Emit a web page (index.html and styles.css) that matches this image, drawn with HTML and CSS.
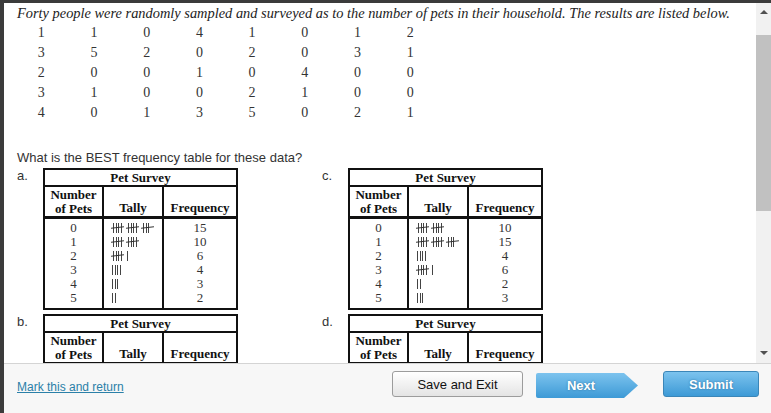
FILE: index.html
```html
<!DOCTYPE html>
<html>
<head>
<meta charset="utf-8">
<link rel="stylesheet" href="styles.css">
</head>
<body>
<div class="frame">
  <div class="main">
    <div class="content">
      <p class="intro">Forty people were randomly sampled and surveyed as to the number of pets in their household. The results are listed below.</p>
      <div class="nums">
        <span>1</span><span>1</span><span>0</span><span>4</span><span>1</span><span>0</span><span>1</span><span>2</span>
        <span>3</span><span>5</span><span>2</span><span>0</span><span>2</span><span>0</span><span>3</span><span>1</span>
        <span>2</span><span>0</span><span>0</span><span>1</span><span>0</span><span>4</span><span>0</span><span>0</span>
        <span>3</span><span>1</span><span>0</span><span>0</span><span>2</span><span>1</span><span>0</span><span>0</span>
        <span>4</span><span>0</span><span>1</span><span>3</span><span>5</span><span>0</span><span>2</span><span>1</span>
      </div>
      <p class="question">What is the BEST frequency table for these data?</p>
      <div class="options">
        <span class="lbl">a.</span>
        <table class="pt">
          <colgroup><col class="k1"><col class="k2"><col class="k3"></colgroup>
          <tr><th class="title" colspan="3">Pet Survey</th></tr>
          <tr class="hd"><td>Number<br>of Pets</td><td>Tally</td><td>Frequency</td></tr>
          <tr class="first"><td>0</td><td class="tl"><i class="t5"></i><i class="t5"></i><i class="t5"></i></td><td>15</td></tr>
          <tr><td>1</td><td class="tl"><i class="t5"></i><i class="t5"></i></td><td>10</td></tr>
          <tr><td>2</td><td class="tl"><i class="t5"></i><i class="t1"></i></td><td>6</td></tr>
          <tr><td>3</td><td class="tl"><i class="t4"></i></td><td>4</td></tr>
          <tr><td>4</td><td class="tl"><i class="t3"></i></td><td>3</td></tr>
          <tr class="last"><td>5</td><td class="tl"><i class="t2"></i></td><td>2</td></tr>
        </table>
        <span class="gap"></span>
        <span class="lbl">c.</span>
        <table class="pt">
          <colgroup><col class="k1"><col class="k2"><col class="k3"></colgroup>
          <tr><th class="title" colspan="3">Pet Survey</th></tr>
          <tr class="hd"><td>Number<br>of Pets</td><td>Tally</td><td>Frequency</td></tr>
          <tr class="first"><td>0</td><td class="tl"><i class="t5"></i><i class="t5"></i></td><td>10</td></tr>
          <tr><td>1</td><td class="tl"><i class="t5"></i><i class="t5"></i><i class="t5"></i></td><td>15</td></tr>
          <tr><td>2</td><td class="tl"><i class="t4"></i></td><td>4</td></tr>
          <tr><td>3</td><td class="tl"><i class="t5"></i><i class="t1"></i></td><td>6</td></tr>
          <tr><td>4</td><td class="tl"><i class="t2"></i></td><td>2</td></tr>
          <tr class="last"><td>5</td><td class="tl"><i class="t3"></i></td><td>3</td></tr>
        </table>

        <span class="lbl">b.</span>
        <table class="pt">
          <colgroup><col class="k1"><col class="k2"><col class="k3"></colgroup>
          <tr><th class="title" colspan="3">Pet Survey</th></tr>
          <tr class="hd"><td>Number<br>of Pets</td><td>Tally</td><td>Frequency</td></tr>
          <tr class="first"><td>0</td><td class="tl"><i class="t5"></i><i class="t5"></i><i class="t5"></i></td><td>15</td></tr>
          <tr><td>1</td><td class="tl"><i class="t5"></i><i class="t5"></i></td><td>10</td></tr>
          <tr><td>2</td><td class="tl"><i class="t4"></i></td><td>4</td></tr>
          <tr><td>3</td><td class="tl"><i class="t5"></i><i class="t1"></i></td><td>6</td></tr>
          <tr><td>4</td><td class="tl"><i class="t3"></i></td><td>3</td></tr>
          <tr class="last"><td>5</td><td class="tl"><i class="t2"></i></td><td>2</td></tr>
        </table>
        <span class="gap"></span>
        <span class="lbl">d.</span>
        <table class="pt">
          <colgroup><col class="k1"><col class="k2"><col class="k3"></colgroup>
          <tr><th class="title" colspan="3">Pet Survey</th></tr>
          <tr class="hd"><td>Number<br>of Pets</td><td>Tally</td><td>Frequency</td></tr>
          <tr class="first"><td>0</td><td class="tl"><i class="t5"></i><i class="t5"></i></td><td>10</td></tr>
          <tr><td>1</td><td class="tl"><i class="t5"></i><i class="t5"></i><i class="t5"></i></td><td>15</td></tr>
          <tr><td>2</td><td class="tl"><i class="t5"></i><i class="t1"></i></td><td>6</td></tr>
          <tr><td>3</td><td class="tl"><i class="t4"></i></td><td>4</td></tr>
          <tr><td>4</td><td class="tl"><i class="t2"></i></td><td>2</td></tr>
          <tr class="last"><td>5</td><td class="tl"><i class="t3"></i></td><td>3</td></tr>
        </table>
      </div>
    </div>
    <div class="scrollbar">
      <span class="arrow up"></span>
      <span class="thumb"></span>
      <span class="arrow down"></span>
    </div>
  </div>
  <div class="footer">
    <a class="mark" href="#">Mark this and return</a>
    <div class="buttons">
      <button class="btn save">Save and Exit</button>
      <button class="btn next">Next</button>
      <button class="btn submit">Submit</button>
    </div>
  </div>
</div>
</body>
</html>
```

FILE: styles.css
```css
html, body {
  margin: 0;
  padding: 0;
}
body {
  background: #3b3b3b;
  padding: 3px 0 0 4px;
  width: 771px;
  height: 413px;
  box-sizing: border-box;
  overflow: hidden;
}
.frame {
  width: 767px;
  height: 410px;
  background: #fff;
  display: flex;
  flex-direction: column;
}
.main {
  height: 360px;
  display: flex;
  flex: none;
}
.content {
  flex: 1;
  overflow: hidden;
  padding-left: 13px;
}
.intro {
  margin: 0;
  height: 20px;
  line-height: 20px;
  font-family: "Liberation Serif", serif;
  font-style: italic;
  font-size: 14.4px;
  color: #222;
  white-space: nowrap;
}
.nums {
  display: grid;
  grid-template-columns: repeat(8, 52.7px);
  grid-auto-rows: 20px;
  margin-left: -2px;
  font-family: "Liberation Serif", serif;
  font-size: 14px;
  line-height: 20px;
  color: #333;
  text-align: center;
}
.question {
  margin: 27px 0 0;
  font-family: "Liberation Sans", Arial, sans-serif;
  font-size: 13px;
  line-height: 16px;
  color: #333;
}
.options {
  display: grid;
  grid-template-columns: 26px 195px 84px 26px 195px;
  row-gap: 4px;
  margin-top: 2px;
  align-items: start;
}
.lbl {
  font-family: "Liberation Sans", Arial, sans-serif;
  font-size: 13px;
  line-height: 16px;
  color: #333;
}
.pt {
  border-collapse: collapse;
  width: 193px;
  table-layout: fixed;
  border: 2px solid #111;
  font-family: "Liberation Serif", serif;
  font-size: 13px;
  color: #333;
}
.pt col.k1 { width: 59px; }
.pt col.k2 { width: 60px; }
.pt col.k3 { width: 74px; }
.pt td, .pt th {
  padding: 0;
  text-align: center;
  line-height: 14px;
}
.pt .title {
  height: 15px;
  line-height: 15px;
  font-weight: bold;
  color: #111;
  border-bottom: 2px solid #111;
}
.pt .hd td {
  height: 28px;
  vertical-align: bottom;
  font-weight: bold;
  color: #111;
  border-bottom: 3px solid #111;
  padding-bottom: 1px;
}
.pt .hd td:first-child {
  vertical-align: top;
  padding: 1px 0 0;
  height: 28px;
}
.pt td + td {
  border-left: 2px solid #111;
}
.pt .first td { padding-top: 2px; }
.pt .last td { padding-bottom: 3px; }
.pt td.tl {
  text-align: left;
  padding-left: 8px;
}
.pt i {
  display: inline-block;
  position: relative;
  height: 10px;
  vertical-align: -1px;
  margin-right: 4px;
  background: repeating-linear-gradient(90deg, #444 0 1px, transparent 1px 2.6px);
}
.pt i.t1 { width: 1px; }
.pt i.t2 { width: 3.6px; }
.pt i.t3 { width: 6.2px; }
.pt i.t4 { width: 8.8px; }
.pt i.t5 { width: 8.8px; margin-right: 5px; margin-left: 1px; }
.pt i.t5::after {
  content: "";
  position: absolute;
  left: -2px;
  right: -2px;
  top: 4px;
  height: 1px;
  background: #333;
  transform: rotate(-6deg);
}
.scrollbar {
  width: 15px;
  flex: none;
  background: #f1f1f1;
  display: flex;
  flex-direction: column;
  align-items: center;
}
.arrow {
  width: 0;
  height: 0;
  border-left: 4px solid transparent;
  border-right: 4px solid transparent;
}
.arrow.up {
  margin-top: 7px;
  border-bottom: 4px solid #505050;
}
.thumb {
  width: 15px;
  height: 176px;
  margin-top: 21px;
  background: #c1c1c1;
}
.arrow.down {
  margin-top: auto;
  margin-bottom: 8px;
  border-top: 4px solid #505050;
}
.footer {
  flex: 1;
  border-top: 1px solid #d4d4d4;
  background: #f7f7f7;
  display: flex;
  align-items: flex-start;
  padding: 7px 12px 0 13px;
}
.mark {
  font-family: "Liberation Sans", Arial, sans-serif;
  font-size: 12px;
  color: #2b80a8;
  text-decoration: underline;
  margin-top: 9px;
}
.buttons {
  margin-left: auto;
  display: flex;
  align-items: flex-start;
}
.btn {
  height: 26px;
  padding: 0;
  font-family: "Liberation Sans", Arial, sans-serif;
  font-size: 13px;
  cursor: pointer;
}
.save {
  width: 131px;
  border: 1px solid #9c9c9c;
  border-radius: 3px;
  background: linear-gradient(#ffffff, #e4e4e4);
  color: #111;
}
.next {
  width: 102px;
  margin-left: 13px;
  margin-top: 2px;
  height: 25px;
  border: 0;
  padding-right: 12px;
  background: linear-gradient(#7cc3ee, #3d9ad6);
  clip-path: polygon(0 0, 88px 0, 102px 50%, 88px 100%, 0 100%);
  border-radius: 2px;
  color: #fff;
  font-weight: bold;
  text-shadow: 0 0 2px #2a6d9a;
}
.submit {
  width: 96px;
  margin-left: 25px;
  border: 1px solid #3b86b8;
  border-radius: 3px;
  background: linear-gradient(#7cc3ee, #3d9ad6);
  color: #fff;
  font-weight: bold;
  text-shadow: 0 0 2px #2a6d9a;
}
```
